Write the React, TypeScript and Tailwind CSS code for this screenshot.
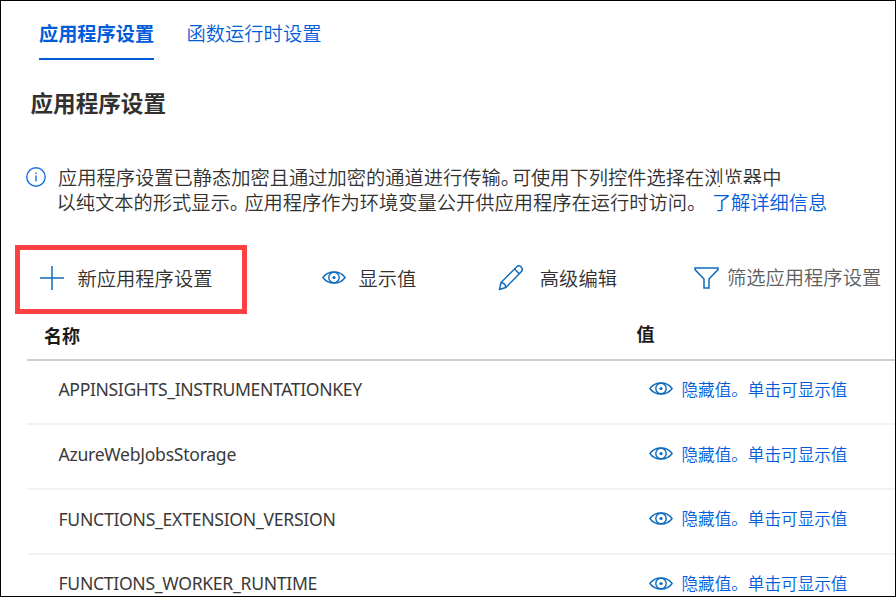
import React from 'react';

const settings = [
  { name: 'APPINSIGHTS_INSTRUMENTATIONKEY', tracking: 'tracking-[-0.37px]' },
  { name: 'AzureWebJobsStorage', tracking: 'tracking-[-0.28px]' },
  { name: 'FUNCTIONS_EXTENSION_VERSION', tracking: 'tracking-[-0.27px]' },
  { name: 'FUNCTIONS_WORKER_RUNTIME', tracking: 'tracking-[-0.30px]' },
];

function EyeIcon() {
  return (
    <svg className="block h-[14px] w-6 shrink-0" viewBox="0 0 24 14" fill="none" stroke="#0f6cbd" strokeWidth="1.4">
      <path d="M0.9 6.500C3.4 3 7.2 1 12 1s8.600 2 11.100 5.500C20.600 10 16.800 12 12 12S3.400 10 .9 6.500Z" />
      <circle cx="12" cy="6.500" r="5.200" />
      <circle cx="12" cy="6.500" r="1.600" fill="#0f6cbd" stroke="none" />
    </svg>
  );
}

function PlusIcon() {
  return (
    <svg className="block h-6 w-6 shrink-0" viewBox="0 0 24 24" stroke="#0f6cbd" strokeWidth="1.5">
      <path d="M12 0v24M0 12h24" />
    </svg>
  );
}

function PencilIcon() {
  return (
    <svg className="block h-[26px] w-[26px] shrink-0" viewBox="0 0 26 26" fill="none" stroke="#0f6cbd" strokeWidth="1.5" strokeLinejoin="round">
      <path d="M1.500 24.500 3 17.500 18.500 2c1.500-1.500 3.500-1.200 4.700 0s1.500 3.300 0 4.800L7.800 22.500Z" />
      <path d="M16.600 4l5 5M3 17.500c2.600.3 4.400 2.200 4.800 5" />
    </svg>
  );
}

function FilterIcon() {
  return (
    <svg className="block h-[22px] w-[25px] shrink-0" viewBox="0 0 25 22" fill="none" stroke="#0f6cbd" strokeWidth="1.5">
      <path d="M1 1h23v1.600L15 12v9h-5v-9L1 2.600Z" />
    </svg>
  );
}

function InfoIcon() {
  return (
    <svg className="block h-5 w-5 shrink-0" viewBox="0 0 20 20" fill="none" stroke="#1a6fe0" strokeWidth="1.4">
      <circle cx="10" cy="10" r="9.200" />
      <path d="M10 8.500v6M10 5.500v1.500" />
    </svg>
  );
}

export default function App() {
  return (
    <div className="relative h-[597px] w-[896px] overflow-hidden border border-black bg-white font-['Noto_Sans','Noto_Sans_CJK_SC',sans-serif] text-[19.3px] text-[#323130]">
      <nav className="flex h-[59px] items-stretch pl-[38px] font-['Noto_Sans_CJK_SC',sans-serif] leading-[64px] text-[#015cda]">
        <div className="w-[115px] border-b-2 border-[#015cda] text-[19.2px] font-bold whitespace-nowrap">应用程序设置</div>
        <div className="ml-[32.500px] font-[350]">函数运行时设置</div>
      </nav>

      <h1 className="mt-[27px] pl-[29.500px] font-['Noto_Sans_CJK_SC',sans-serif] text-[22.6px] leading-8 font-bold">应用程序设置</h1>

      <section className="mt-[45px] flex pl-[24.500px]">
        <div className="pt-[3px]"><InfoIcon /></div>
        <div className="ml-3 font-['Noto_Sans_CJK_SC',sans-serif] text-[19.25px] leading-[26px] font-[350] whitespace-nowrap">
          <p className="pl-[0.5px]">
            应用程序设置已静态加密且通过加密的通道进行传输<span className="mr-[1.500px] [font-feature-settings:'halt']">。</span>可使用下列控件选择在浏<span className="relative">览器<span className="absolute bottom-0 -left-1 h-[7px] w-[calc(100%+4px)] bg-white" /></span>中
          </p>
          <p className="-ml-px leading-[25px]">
            以纯文本的形式显示<span className="mr-[5px] [font-feature-settings:'halt']">。</span>应用程序作为环境变量公开供应用程序在运行时访问。
            <a className="ml-[5.500px] text-[#015cda]">了解详细信息</a>
          </p>
        </div>
      </section>

      <div className="mt-[30px] flex h-[69px] items-center pl-[14px] font-['Noto_Sans_CJK_SC',sans-serif] leading-7 font-[350] whitespace-nowrap">
        <div className="flex h-[69px] w-[232px] items-center border-[5px] border-[#fc4044] pb-1 pl-5">
          <PlusIcon />
          <span className="ml-[13.500px]">新应用程序设置</span>
        </div>
        <div className="ml-[75px] flex items-center pb-1">
          <EyeIcon />
          <span className="ml-[12.500px] pt-px">显示值</span>
        </div>
        <div className="ml-[82px] flex items-center pb-1">
          <PencilIcon />
          <span className="ml-[15.500px] pt-px">高级编辑</span>
        </div>
        <div className="ml-[77.500px] flex items-center pb-1 text-[#605e5c]">
          <FilterIcon />
          <span className="-mt-px ml-[7.500px]">筛选应用程序设置</span>
        </div>
      </div>

      <div className="ml-[26px] flex h-[46.500px] border-b-2 border-[#c8d0d8] font-['Noto_Sans_CJK_SC',sans-serif] text-[18px] leading-[42px] font-bold text-[#1b1a19]">
        <div className="w-[592px] pl-[17px]">名称</div>
        <div className="-mt-[2px] pl-[17.500px]">值</div>
      </div>
      {settings.map((s) => (
        <div key={s.name} className="ml-[26px] flex h-[64.8px] items-center border-b-2 border-[#f3f2f1] pb-[5.500px]">
          <div className={`w-[622px] pl-[31.500px] text-[17.6px] text-[#3b3a39] ${s.tracking}`}>{s.name}</div>
          <EyeIcon />
          <span className="ml-[8.500px] font-['Noto_Sans_CJK_SC',sans-serif] text-[16.6px] font-[350] whitespace-nowrap text-[#015cda]">隐藏值。单击可显示值</span>
        </div>
      ))}
      <span className="absolute top-[215px] -left-px h-[2px] w-px bg-white" />
    </div>
  );
}
